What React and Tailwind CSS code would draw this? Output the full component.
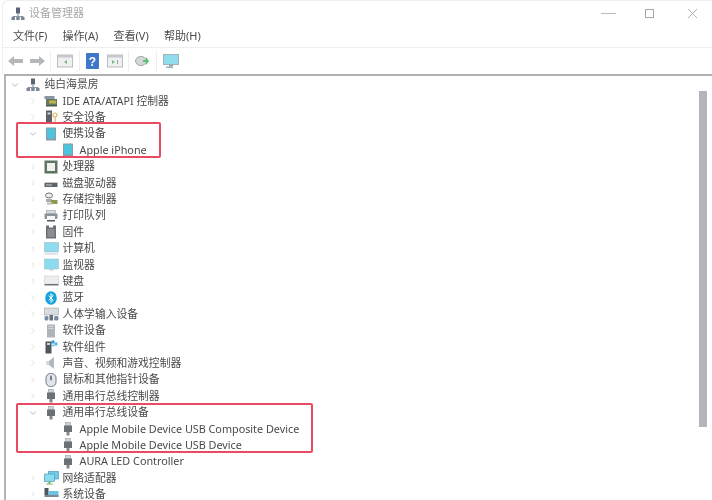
import { ChevronDown, ChevronRight } from 'lucide-react'

const font = { fontFamily: '"Noto Sans", "Noto Sans CJK SC", sans-serif' }

// tiny device icons, all on a 14x14 box
function DeviceIcon({ kind }) {
  const box = { width: 14, height: 14, viewBox: '0 0 14 14' }
  switch (kind) {
    case 'network':
      return (
        <svg {...box}>
          <rect x="5" y="0.5" width="4" height="6" fill="#5a6678" />
          <rect x="6.4" y="6.5" width="1.2" height="3" fill="#8a93a0" />
          <rect x="1.5" y="9" width="11" height="1" fill="#8a93a0" />
          <rect x="0.5" y="10" width="3.5" height="3" fill="#7c8794" />
          <rect x="5.2" y="10" width="3.5" height="3" fill="#7c8794" />
          <rect x="10" y="10" width="3.5" height="3" fill="#7c8794" />
        </svg>
      )
    case 'ide':
      return (
        <svg {...box}>
          <rect x="0.5" y="2" width="10" height="3" fill="#8d96a0" />
          <rect x="2" y="5" width="11" height="6" fill="#5e7f5c" />
          <rect x="5" y="6.5" width="7" height="3" fill="#c9b04e" />
          <rect x="2" y="11" width="11" height="1.5" fill="#4b5a52" />
        </svg>
      )
    case 'security':
      return (
        <svg {...box}>
          <rect x="2" y="0.5" width="6" height="13" fill="#5d6167" />
          <rect x="3.5" y="2.5" width="3" height="2" fill="#cfd4da" />
          <circle cx="11" cy="5" r="2" fill="none" stroke="#e2b46a" strokeWidth="1.2" />
          <rect x="10.5" y="7" width="1.2" height="5" fill="#e2b46a" />
        </svg>
      )
    case 'portable':
      return (
        <svg {...box}>
          <rect x="2" y="0.5" width="10" height="13" rx="0.5" fill="#8f9aa5" />
          <rect x="3" y="1.5" width="8" height="10" fill="#4cc4de" />
        </svg>
      )
    case 'cpu':
      return (
        <svg {...box}>
          <rect x="0.5" y="0.5" width="13" height="13" fill="#5f7562" />
          <rect x="3" y="3" width="8" height="8" fill="#eef2ee" />
        </svg>
      )
    case 'disk':
      return (
        <svg {...box}>
          <rect x="0.5" y="7" width="13" height="4" fill="#5f646b" />
          <rect x="2" y="8.5" width="6" height="1" fill="#c8ccd0" />
          <rect x="0.5" y="6" width="13" height="1" fill="#c4c8cc" />
        </svg>
      )
    case 'storage':
      return (
        <svg {...box}>
          <ellipse cx="5" cy="3.5" rx="3.5" ry="2.5" fill="#eceff0" stroke="#6d7479" />
          <rect x="2" y="7" width="6" height="3" fill="#a8aeb3" />
          <rect x="7" y="8" width="6.5" height="4" fill="#8c9a4e" />
          <rect x="3" y="10.5" width="6" height="2" fill="#b9c2a0" />
        </svg>
      )
    case 'printer':
      return (
        <svg {...box}>
          <rect x="2.5" y="1.5" width="9" height="3" fill="#d7dbdf" stroke="#8b9197" strokeWidth="0.5" />
          <rect x="0.5" y="4.5" width="13" height="5.5" rx="1" fill="#8b9299" />
          <rect x="3" y="7" width="8" height="5.5" fill="#f5f6f7" />
          <rect x="3" y="11" width="8" height="1.5" fill="#555a60" />
        </svg>
      )
    case 'firmware':
      return (
        <svg {...box}>
          <path d="M2 0.5h3v2h4v-2h3v13h-10z" fill="#6d7075" />
          <path d="M3.5 4h7v8h-7z" fill="#8a8d92" />
        </svg>
      )
    case 'computer':
      return (
        <svg {...box} width={15} viewBox="0 0 15 14">
          <rect x="0.5" y="0.5" width="14" height="9.5" fill="#8fdcf0" stroke="#9fb0ba" strokeWidth="0.5" />
          <rect x="1" y="11.5" width="13" height="1" fill="#c5cbd0" />
        </svg>
      )
    case 'monitor':
      return (
        <svg {...box} width={15} viewBox="0 0 15 14">
          <rect x="0.5" y="1" width="14" height="10" fill="#8ddbef" stroke="#a8b6be" strokeWidth="0.5" />
          <rect x="5.5" y="11" width="4" height="1.5" fill="#c5cbd0" />
        </svg>
      )
    case 'keyboard':
      return (
        <svg {...box} width={15} viewBox="0 0 15 14">
          <rect x="0.5" y="2" width="14" height="8" fill="#eceef0" stroke="#c4c8cc" strokeWidth="0.5" />
          <rect x="0.5" y="10" width="14" height="1.5" fill="#70757b" />
        </svg>
      )
    case 'bluetooth':
      return (
        <svg {...box}>
          <ellipse cx="7" cy="7" rx="5.8" ry="6.8" fill="#14a3dc" />
          <path d="M4.6 4.6L9.2 9.2L7 11.4V2.6L9.2 4.8L4.6 9.4" fill="none" stroke="#fff" strokeWidth="1" />
        </svg>
      )
    case 'hid':
      return (
        <svg {...box} width={15} viewBox="0 0 15 14">
          <rect x="0.5" y="1" width="14" height="7" fill="#d9dde0" stroke="#8f969c" strokeWidth="0.5" />
          <rect x="0.5" y="9" width="4" height="4.5" rx="1.5" fill="#7b8ca6" />
          <rect x="5.5" y="8" width="3.5" height="5.5" fill="#66707c" />
          <rect x="10" y="9" width="4.5" height="4.5" rx="1.5" fill="#7b8ca6" />
        </svg>
      )
    case 'software':
      return (
        <svg {...box}>
          <rect x="3" y="0.5" width="8" height="13" fill="#aeb4ba" />
          <rect x="4.5" y="2" width="5" height="1" fill="#d5d9dc" />
          <rect x="4.5" y="4" width="5" height="1" fill="#d5d9dc" />
        </svg>
      )
    case 'component':
      return (
        <svg {...box}>
          <rect x="1.5" y="1.5" width="6" height="12" fill="#50565c" />
          <rect x="3" y="3" width="3" height="2" fill="#cfd4d8" />
          <rect x="7.5" y="0.5" width="3" height="3" fill="#2f97d6" />
          <rect x="10.5" y="2.5" width="3" height="3" fill="#55b4e4" />
          <rect x="7.5" y="4.5" width="3" height="2" fill="#7cc8ee" />
        </svg>
      )
    case 'sound':
      return (
        <svg {...box}>
          <path d="M2 5h3l5-4v12l-5-4h-3z" fill="#b4b9be" />
          <rect x="2" y="5" width="3" height="4" fill="#d8dbde" />
        </svg>
      )
    case 'mouse':
      return (
        <svg {...box}>
          <rect x="2" y="0.5" width="10" height="13" rx="4.5" fill="#e2e6ea" stroke="#6f7c8c" />
          <rect x="6" y="2.5" width="2" height="5" rx="1" fill="#6f7c8c" />
        </svg>
      )
    case 'usb':
      return (
        <svg {...box}>
          <rect x="4.5" y="0.5" width="5" height="3" fill="#d0d3d6" stroke="#8b8f94" strokeWidth="0.5" />
          <rect x="3" y="3.5" width="8" height="6.5" fill="#6c7075" />
          <rect x="5.5" y="10" width="3" height="3.5" fill="#83878c" />
        </svg>
      )
    case 'adapter':
      return (
        <svg {...box} width={15} viewBox="0 0 15 14">
          <rect x="4.5" y="0.5" width="10" height="7.5" fill="#6fcbe6" stroke="#3f93b4" strokeWidth="0.6" />
          <rect x="0.5" y="3" width="10" height="7.5" fill="#8adcef" stroke="#3f93b4" strokeWidth="0.6" />
          <rect x="4.5" y="10.5" width="2" height="2" fill="#62b257" />
          <rect x="2.5" y="12.5" width="6" height="1" fill="#62b257" />
        </svg>
      )
    case 'system':
      return (
        <svg {...box} width={15} viewBox="0 0 15 14">
          <rect x="0.5" y="1" width="4" height="7" fill="#4d5560" />
          <rect x="4.5" y="4" width="10" height="6" fill="#6ac4e0" />
          <rect x="0.5" y="8" width="14" height="2" fill="#7d8791" />
        </svg>
      )
    default:
      return null
  }
}

const rows = [
  { level: 0, open: true, icon: 'network', label: '纯白海景房' },
  { level: 1, icon: 'ide', label: 'IDE ATA/ATAPI 控制器' },
  { level: 1, icon: 'security', label: '安全设备' },
  { level: 1, open: true, icon: 'portable', label: '便携设备' },
  { level: 2, icon: 'portable', label: 'Apple iPhone' },
  { level: 1, icon: 'cpu', label: '处理器' },
  { level: 1, icon: 'disk', label: '磁盘驱动器' },
  { level: 1, icon: 'storage', label: '存储控制器' },
  { level: 1, icon: 'printer', label: '打印队列' },
  { level: 1, icon: 'firmware', label: '固件' },
  { level: 1, icon: 'computer', label: '计算机' },
  { level: 1, icon: 'monitor', label: '监视器' },
  { level: 1, icon: 'keyboard', label: '键盘' },
  { level: 1, icon: 'bluetooth', label: '蓝牙' },
  { level: 1, icon: 'hid', label: '人体学输入设备' },
  { level: 1, icon: 'software', label: '软件设备' },
  { level: 1, icon: 'component', label: '软件组件' },
  { level: 1, icon: 'sound', label: '声音、视频和游戏控制器' },
  { level: 1, icon: 'mouse', label: '鼠标和其他指针设备' },
  { level: 1, icon: 'usb', label: '通用串行总线控制器' },
  { level: 1, open: true, icon: 'usb', label: '通用串行总线设备' },
  { level: 2, icon: 'usb', label: 'Apple Mobile Device USB Composite Device' },
  { level: 2, icon: 'usb', label: 'Apple Mobile Device USB Device' },
  { level: 2, icon: 'usb', label: 'AURA LED Controller' },
  { level: 1, icon: 'adapter', label: '网络适配器' },
  { level: 1, icon: 'system', label: '系统设备' },
]

function TreeRow({ level, open, icon, label }) {
  return (
    <div className="flex h-[16.4px] shrink-0 items-center">
      <div className={level === 0 ? 'w-[2px]' : level === 1 ? 'w-[20px]' : 'w-[37px]'} />
      <div className="flex w-[15px] items-center justify-center">
        {level < 2 &&
          (open ? (
            <ChevronDown size={10} strokeWidth={1.4} className="text-[#8a8a8a]" />
          ) : (
            <ChevronRight size={10} strokeWidth={1.4} className="text-[#c8c8c8]" />
          ))}
      </div>
      <div className="flex w-[22px] items-center justify-start pl-[3px]">
        <DeviceIcon kind={icon} />
      </div>
      <span className="whitespace-nowrap text-[10.8px] leading-none text-[#4a4a4a]">{label}</span>
    </div>
  )
}

function ToolbarIcons() {
  return (
    <div className="flex h-[26px] items-center pl-[5px]">
      <svg width="15" height="12" viewBox="0 0 15 12">
        <path d="M0 6L6 1V4H15V8H6V11Z" fill="#b4b8bb" />
      </svg>
      <svg width="15" height="12" viewBox="0 0 15 12" className="ml-[7px]">
        <path d="M15 6L9 1V4H0V8H9V11Z" fill="#b4b8bb" />
      </svg>
      <div className="ml-[5px] h-[20px] w-px bg-[#eeeeee]" />
      <svg width="16" height="14" viewBox="0 0 16 14" className="ml-[6px]">
        <rect x="0.5" y="1" width="15" height="12" fill="#eef0f1" stroke="#b9bdc1" />
        <rect x="0.5" y="1" width="15" height="2.5" fill="#c5c9cd" />
        <path d="M10 6L7 8L10 10Z" fill="#7cb58a" />
      </svg>
      <div className="ml-[6px] h-[20px] w-px bg-[#eeeeee]" />
      <svg width="13" height="16" viewBox="0 0 13 16" className="ml-[6px]">
        <rect width="13" height="16" rx="1" fill="#3f78c8" />
        <text x="6.5" y="12.5" textAnchor="middle" fontSize="12" fontWeight="700" fill="#fff" fontFamily="Liberation Sans">?</text>
      </svg>
      <svg width="16" height="14" viewBox="0 0 16 14" className="ml-[8px]">
        <rect x="0.5" y="1" width="15" height="12" fill="#eef0f1" stroke="#b9bdc1" />
        <rect x="0.5" y="1" width="15" height="2.5" fill="#c5c9cd" />
        <path d="M5 6L8 8L5 10Z" fill="#7cb58a" />
        <rect x="10" y="6" width="1" height="4" fill="#9ba0a5" />
      </svg>
      <div className="ml-[5px] h-[20px] w-px bg-[#eeeeee]" />
      <svg width="16" height="14" viewBox="0 0 16 14" className="ml-[6px]">
        <ellipse cx="6" cy="7" rx="5.5" ry="4.5" fill="#d4d8d8" stroke="#a3a8a8" />
        <path d="M11 3V6H14V8H11V11L8 7Z" fill="#56c06c" transform="rotate(180 11 7)" />
      </svg>
      <div className="ml-[5px] h-[20px] w-px bg-[#eeeeee]" />
      <svg width="16" height="15" viewBox="0 0 16 15" className="ml-[6px]">
        <rect x="0.5" y="0.5" width="15" height="10" fill="#8fdcee" stroke="#a5b2ba" />
        <rect x="6" y="10.5" width="4" height="2" fill="#9aa3aa" />
        <rect x="3" y="12.5" width="7" height="1.5" fill="#8fb7c4" />
      </svg>
    </div>
  )
}

export default function App() {
  return (
    <div className="relative h-[500px] w-[712px] overflow-hidden bg-white blur-[0.35px]" style={font}>
      <div className="ml-[2px] rounded-tl-[6px] border-l border-t border-[#eeeeee]">
        {/* Title bar */}
        <div className="flex h-[25px] items-center pl-[8px] pr-[14px]">
          <DeviceIcon kind="network" />
          <span className="ml-[4px] text-[11px] text-[#a8a8a8]">设备管理器</span>
          <div className="ml-auto flex items-center">
            <div className="h-px w-[15px] bg-[#bbbbbb]" />
            <div className="ml-[29px] h-[9px] w-[9px] border border-[#a8a8a8]" />
            <svg width="11" height="11" viewBox="0 0 11 11" className="ml-[33px]">
              <path d="M1 1L10 10M10 1L1 10" stroke="#aaaaaa" strokeWidth="0.9" />
            </svg>
          </div>
        </div>

        {/* Menu bar */}
        <div className="flex h-[21px] items-center gap-[15.3px] pl-[10px] text-[11px] text-[#4a4a4a]">
          <span>文件(F)</span>
          <span>操作(A)</span>
          <span>查看(V)</span>
          <span>帮助(H)</span>
        </div>

        <div className="h-px bg-[#eeeeee]" />
        <ToolbarIcons />
      </div>
      <div className="ml-[4px] h-[1.5px] bg-[#b0b0b0]" />

      {/* Device tree */}
      <div className="flex h-[426px]">
        <div className="ml-[4px] w-[1.5px] bg-[#b5b5b5]" />
        <div className="flex flex-1 flex-col overflow-hidden pt-[1px]">
          {rows.map((row) => (
            <TreeRow key={row.label} {...row} />
          ))}
        </div>
        <div className="mr-[5px] mt-[15px] h-[336px] w-[8px] bg-[#b5b3bb]" />
      </div>

      {/* Red highlight boxes */}
      <div className="absolute left-[16px] top-[122px] h-[36px] w-[145px] rounded-[2px] border-2 border-[#ea4a62]" />
      <div className="absolute left-[16px] top-[403px] h-[50px] w-[297px] rounded-[2px] border-2 border-[#ea4a62]" />
    </div>
  )
}
